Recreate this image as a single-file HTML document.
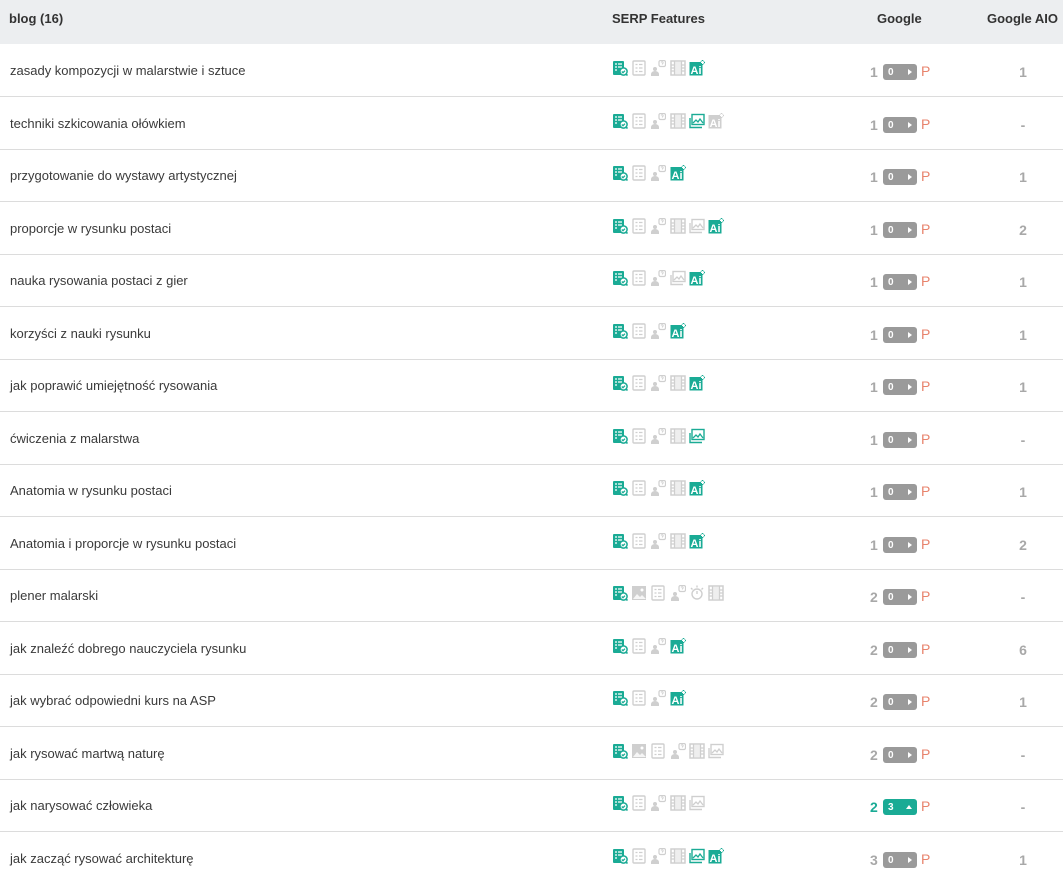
<!DOCTYPE html>
<html><head><meta charset="utf-8"><style>
body{margin:0;width:1063px;height:881px;overflow:hidden;background:#fff;font-family:"Liberation Sans",Arial,sans-serif;color:#333;}
.hd{position:absolute;left:0;top:0;width:1063px;height:44px;background:#eceef0;font-size:13px;font-weight:bold;color:#333}
.hd span{position:absolute;top:11px}
.row{position:absolute;left:0;width:1063px;height:52px;border-bottom:1px solid #dcdcdc;font-size:13px}
.kw{position:absolute;left:10px;top:19px;color:#3a3a3a}
.ic{position:absolute;top:16px;width:16px;height:16px}
.t{color:#1aab95}.g{color:#cfcfcf}
.pos{position:absolute;left:870px;top:20px;font-weight:bold;font-size:14px;color:#a8a8a8}
.bd{position:absolute;left:883px;top:20px;width:34px;height:16px;border-radius:3px;background:#9a9a9a;color:#fff;font-size:10px;font-weight:bold}
.bd b{position:absolute;left:5px;top:3px}
.bd i{position:absolute;right:5px;top:5px;width:0;height:0;border-left:4px solid #fff;border-top:3px solid transparent;border-bottom:3px solid transparent}
.bd.up{background:#1aab95}.bd.up i{border-left:3px solid transparent;border-right:3px solid transparent;border-bottom:4px solid #fff;border-top:0;top:6px}
.p{position:absolute;left:921px;top:19px;color:#e8836c;font-size:14px}
.aio{position:absolute;left:1000px;width:46px;text-align:center;top:20px;font-weight:bold;font-size:14px;color:#a8a8a8}
</style></head><body>
<svg width="0" height="0" style="position:absolute">
<defs>
<symbol id="a" viewBox="0 0 16 16"><rect x="1" y="1" width="11" height="14" rx="1" fill="currentColor"/><path d="M3 4h2M6 4h4M3 7h2M6 7h4M3 10h2" stroke="#fff" stroke-width="1.3"/><circle cx="11.5" cy="11.5" r="3.6" fill="#fff" stroke="currentColor" stroke-width="1.5"/><path d="M9.8 11.5l1.2 1.2 2-2" stroke="currentColor" stroke-width="1.3" fill="none"/><path d="M14 14l1.5 1.5" stroke="currentColor" stroke-width="1.6"/></symbol>
<symbol id="b" viewBox="0 0 16 16"><rect x="2" y="1" width="12" height="14" rx="1" fill="none" stroke="currentColor" stroke-width="1.4"/><path d="M4.5 4.5h2M8 4.5h3.5M4.5 8h2M8 8h3.5M4.5 11.5h2M8 11.5h3.5" stroke="currentColor" stroke-width="1.3"/></symbol>
<symbol id="c" viewBox="0 0 16 16"><circle cx="5" cy="9" r="2" fill="currentColor"/><path d="M1 16v-2a4 3 0 0 1 8 0v2z" fill="currentColor"/><rect x="9" y="0.5" width="6.5" height="6" rx="1.5" fill="none" stroke="currentColor" stroke-width="1.2"/><path d="M11.2 2.5a1 1 0 1 1 1.2 1.2v.8" stroke="currentColor" stroke-width="1" fill="none"/></symbol>
<symbol id="d" viewBox="0 0 16 16"><rect x="1" y="1" width="14" height="14" fill="none" stroke="currentColor" stroke-width="1.5"/><path d="M4.5 1v14M11.5 1v14M1 5h3.5M1 8h3.5M1 11h3.5M11.5 5H15M11.5 8H15M11.5 11H15" stroke="currentColor" stroke-width="1.3"/><rect x="5" y="2" width="6" height="12" fill="currentColor" opacity=".35"/></symbol>
<symbol id="e" viewBox="0 0 16 16"><rect x="3" y="1.5" width="12" height="10" fill="none" stroke="currentColor" stroke-width="1.4"/><path d="M1 5v9.5h12" stroke="currentColor" stroke-width="1.4" fill="none"/><path d="M4 10l3-3 2 2 2-3 3 4" stroke="currentColor" stroke-width="1.3" fill="none"/></symbol>
<symbol id="f" viewBox="0 0 16 16"><rect x="0.5" y="2" width="13" height="13.5" fill="currentColor"/><text x="1.5" y="14" font-family="Liberation Sans" font-weight="bold" font-size="11" fill="#fff">Ai</text><path d="M13.5 0v5M11 2.5h5" stroke="currentColor" stroke-width="1.6"/><path d="M13.5 1v3M12 2.5h3" stroke="#fff" stroke-width="1"/></symbol>
<symbol id="m" viewBox="0 0 16 16"><rect x="1" y="1" width="14" height="14" fill="currentColor"/><path d="M2 14l4-5 3 3 2-2 4 4z" fill="#fff" opacity=".8"/><circle cx="11" cy="5" r="1.5" fill="#fff"/></symbol>
<symbol id="s" viewBox="0 0 16 16"><circle cx="8" cy="9" r="5" fill="none" stroke="currentColor" stroke-width="1.4"/><path d="M8 9V6M8 0.5v2M2 3l1.5 1.5M14 3l-1.5 1.5" stroke="currentColor" stroke-width="1.4"/></symbol>
</defs></svg>

<div class="hd"><span style="left:9px">blog (16)</span><span style="left:612px">SERP Features</span><span style="left:877px">Google</span><span style="left:987px">Google AIO</span></div>

<div class="row" style="top:44px"><div class="kw">zasady kompozycji w malarstwie i sztuce</div><svg class="ic t" style="left:612px"><use href="#a"/></svg><svg class="ic g" style="left:631px"><use href="#b"/></svg><svg class="ic g" style="left:650px"><use href="#c"/></svg><svg class="ic g" style="left:670px"><use href="#d"/></svg><svg class="ic t" style="left:689px"><use href="#f"/></svg><div class="pos">1</div><div class="bd"><b>0</b><i></i></div><div class="p">P</div><div class="aio">1</div></div>

<div class="row" style="top:97px"><div class="kw">techniki szkicowania ołówkiem</div><svg class="ic t" style="left:612px"><use href="#a"/></svg><svg class="ic g" style="left:631px"><use href="#b"/></svg><svg class="ic g" style="left:650px"><use href="#c"/></svg><svg class="ic g" style="left:670px"><use href="#d"/></svg><svg class="ic t" style="left:689px"><use href="#e"/></svg><svg class="ic g" style="left:708px"><use href="#f"/></svg><div class="pos">1</div><div class="bd"><b>0</b><i></i></div><div class="p">P</div><div class="aio">-</div></div>

<div class="row" style="top:149px"><div class="kw">przygotowanie do wystawy artystycznej</div><svg class="ic t" style="left:612px"><use href="#a"/></svg><svg class="ic g" style="left:631px"><use href="#b"/></svg><svg class="ic g" style="left:650px"><use href="#c"/></svg><svg class="ic t" style="left:670px"><use href="#f"/></svg><div class="pos">1</div><div class="bd"><b>0</b><i></i></div><div class="p">P</div><div class="aio">1</div></div>

<div class="row" style="top:202px"><div class="kw">proporcje w rysunku postaci</div><svg class="ic t" style="left:612px"><use href="#a"/></svg><svg class="ic g" style="left:631px"><use href="#b"/></svg><svg class="ic g" style="left:650px"><use href="#c"/></svg><svg class="ic g" style="left:670px"><use href="#d"/></svg><svg class="ic g" style="left:689px"><use href="#e"/></svg><svg class="ic t" style="left:708px"><use href="#f"/></svg><div class="pos">1</div><div class="bd"><b>0</b><i></i></div><div class="p">P</div><div class="aio">2</div></div>

<div class="row" style="top:254px"><div class="kw">nauka rysowania postaci z gier</div><svg class="ic t" style="left:612px"><use href="#a"/></svg><svg class="ic g" style="left:631px"><use href="#b"/></svg><svg class="ic g" style="left:650px"><use href="#c"/></svg><svg class="ic g" style="left:670px"><use href="#e"/></svg><svg class="ic t" style="left:689px"><use href="#f"/></svg><div class="pos">1</div><div class="bd"><b>0</b><i></i></div><div class="p">P</div><div class="aio">1</div></div>

<div class="row" style="top:307px"><div class="kw">korzyści z nauki rysunku</div><svg class="ic t" style="left:612px"><use href="#a"/></svg><svg class="ic g" style="left:631px"><use href="#b"/></svg><svg class="ic g" style="left:650px"><use href="#c"/></svg><svg class="ic t" style="left:670px"><use href="#f"/></svg><div class="pos">1</div><div class="bd"><b>0</b><i></i></div><div class="p">P</div><div class="aio">1</div></div>

<div class="row" style="top:359px"><div class="kw">jak poprawić umiejętność rysowania</div><svg class="ic t" style="left:612px"><use href="#a"/></svg><svg class="ic g" style="left:631px"><use href="#b"/></svg><svg class="ic g" style="left:650px"><use href="#c"/></svg><svg class="ic g" style="left:670px"><use href="#d"/></svg><svg class="ic t" style="left:689px"><use href="#f"/></svg><div class="pos">1</div><div class="bd"><b>0</b><i></i></div><div class="p">P</div><div class="aio">1</div></div>

<div class="row" style="top:412px"><div class="kw">ćwiczenia z malarstwa</div><svg class="ic t" style="left:612px"><use href="#a"/></svg><svg class="ic g" style="left:631px"><use href="#b"/></svg><svg class="ic g" style="left:650px"><use href="#c"/></svg><svg class="ic g" style="left:670px"><use href="#d"/></svg><svg class="ic t" style="left:689px"><use href="#e"/></svg><div class="pos">1</div><div class="bd"><b>0</b><i></i></div><div class="p">P</div><div class="aio">-</div></div>

<div class="row" style="top:464px"><div class="kw">Anatomia w rysunku postaci</div><svg class="ic t" style="left:612px"><use href="#a"/></svg><svg class="ic g" style="left:631px"><use href="#b"/></svg><svg class="ic g" style="left:650px"><use href="#c"/></svg><svg class="ic g" style="left:670px"><use href="#d"/></svg><svg class="ic t" style="left:689px"><use href="#f"/></svg><div class="pos">1</div><div class="bd"><b>0</b><i></i></div><div class="p">P</div><div class="aio">1</div></div>

<div class="row" style="top:517px"><div class="kw">Anatomia i proporcje w rysunku postaci</div><svg class="ic t" style="left:612px"><use href="#a"/></svg><svg class="ic g" style="left:631px"><use href="#b"/></svg><svg class="ic g" style="left:650px"><use href="#c"/></svg><svg class="ic g" style="left:670px"><use href="#d"/></svg><svg class="ic t" style="left:689px"><use href="#f"/></svg><div class="pos">1</div><div class="bd"><b>0</b><i></i></div><div class="p">P</div><div class="aio">2</div></div>

<div class="row" style="top:569px"><div class="kw">plener malarski</div><svg class="ic t" style="left:612px"><use href="#a"/></svg><svg class="ic g" style="left:631px"><use href="#m"/></svg><svg class="ic g" style="left:650px"><use href="#b"/></svg><svg class="ic g" style="left:670px"><use href="#c"/></svg><svg class="ic g" style="left:689px"><use href="#s"/></svg><svg class="ic g" style="left:708px"><use href="#d"/></svg><div class="pos">2</div><div class="bd"><b>0</b><i></i></div><div class="p">P</div><div class="aio">-</div></div>

<div class="row" style="top:622px"><div class="kw">jak znaleźć dobrego nauczyciela rysunku</div><svg class="ic t" style="left:612px"><use href="#a"/></svg><svg class="ic g" style="left:631px"><use href="#b"/></svg><svg class="ic g" style="left:650px"><use href="#c"/></svg><svg class="ic t" style="left:670px"><use href="#f"/></svg><div class="pos">2</div><div class="bd"><b>0</b><i></i></div><div class="p">P</div><div class="aio">6</div></div>

<div class="row" style="top:674px"><div class="kw">jak wybrać odpowiedni kurs na ASP</div><svg class="ic t" style="left:612px"><use href="#a"/></svg><svg class="ic g" style="left:631px"><use href="#b"/></svg><svg class="ic g" style="left:650px"><use href="#c"/></svg><svg class="ic t" style="left:670px"><use href="#f"/></svg><div class="pos">2</div><div class="bd"><b>0</b><i></i></div><div class="p">P</div><div class="aio">1</div></div>

<div class="row" style="top:727px"><div class="kw">jak rysować martwą naturę</div><svg class="ic t" style="left:612px"><use href="#a"/></svg><svg class="ic g" style="left:631px"><use href="#m"/></svg><svg class="ic g" style="left:650px"><use href="#b"/></svg><svg class="ic g" style="left:670px"><use href="#c"/></svg><svg class="ic g" style="left:689px"><use href="#d"/></svg><svg class="ic g" style="left:708px"><use href="#e"/></svg><div class="pos">2</div><div class="bd"><b>0</b><i></i></div><div class="p">P</div><div class="aio">-</div></div>

<div class="row" style="top:779px"><div class="kw">jak narysować człowieka</div><svg class="ic t" style="left:612px"><use href="#a"/></svg><svg class="ic g" style="left:631px"><use href="#b"/></svg><svg class="ic g" style="left:650px"><use href="#c"/></svg><svg class="ic g" style="left:670px"><use href="#d"/></svg><svg class="ic g" style="left:689px"><use href="#e"/></svg><div class="pos" style="color:#1aab95">2</div><div class="bd up"><b>3</b><i></i></div><div class="p">P</div><div class="aio">-</div></div>

<div class="row" style="top:832px;border-bottom:0"><div class="kw">jak zacząć rysować architekturę</div><svg class="ic t" style="left:612px"><use href="#a"/></svg><svg class="ic g" style="left:631px"><use href="#b"/></svg><svg class="ic g" style="left:650px"><use href="#c"/></svg><svg class="ic g" style="left:670px"><use href="#d"/></svg><svg class="ic t" style="left:689px"><use href="#e"/></svg><svg class="ic t" style="left:708px"><use href="#f"/></svg><div class="pos">3</div><div class="bd"><b>0</b><i></i></div><div class="p">P</div><div class="aio">1</div></div>
</body></html>
